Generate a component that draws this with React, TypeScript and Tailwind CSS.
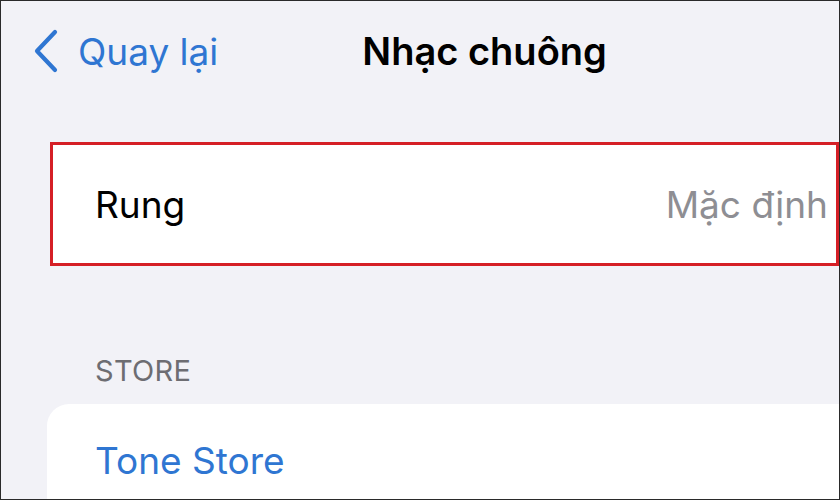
export default function App() {
  return (
    <div
      className="w-[840px] h-[500px] overflow-hidden bg-[#f2f2f7] border border-[#2a2a2a] flex flex-col"
      style={{ fontFamily: 'Inter, "Noto Sans", sans-serif' }}
    >
      {/* thanh điều hướng */}
      <div className="h-[100px] shrink-0 flex items-center pl-[31px]">
        <div className="flex items-center gap-[19px] text-[#2f76d2]">
          <svg width="27" height="44" viewBox="0 0 27 44" fill="none">
            <path
              d="M23 3 L5 22 L23 41"
              stroke="currentColor"
              strokeWidth="4.2"
              strokeLinecap="round"
              strokeLinejoin="round"
            />
          </svg>
          <span className="text-[37px] leading-none">Quay lại</span>
        </div>
        <h1 className="ml-[144px] text-[38px] font-semibold leading-none text-black">
          Nhạc chuông
        </h1>
      </div>

      {/* mục Rung */}
      <div className="mt-[41px] ml-[49px] w-[789px] h-[124px] shrink-0 border-[3px] border-[#d51f26] bg-white flex items-center justify-between pl-[42px] pr-[8px]">
        <span className="text-[37px] leading-none text-black">Rung</span>
        <span className="text-[37px] leading-none text-[#8e8e93]">Mặc định</span>
      </div>

      {/* STORE */}
      <div className="mt-[90px] pl-[94px] text-[29px] leading-none text-[#6d6d72] tracking-[0.3px]">
        STORE
      </div>
      <div className="mt-[19px] ml-[46px] flex-1 bg-white rounded-tl-[22px] pl-[48px] pt-[38px]">
        <span className="text-[37px] leading-none text-[#2f76d2]">Tone Store</span>
      </div>
    </div>
  );
}
